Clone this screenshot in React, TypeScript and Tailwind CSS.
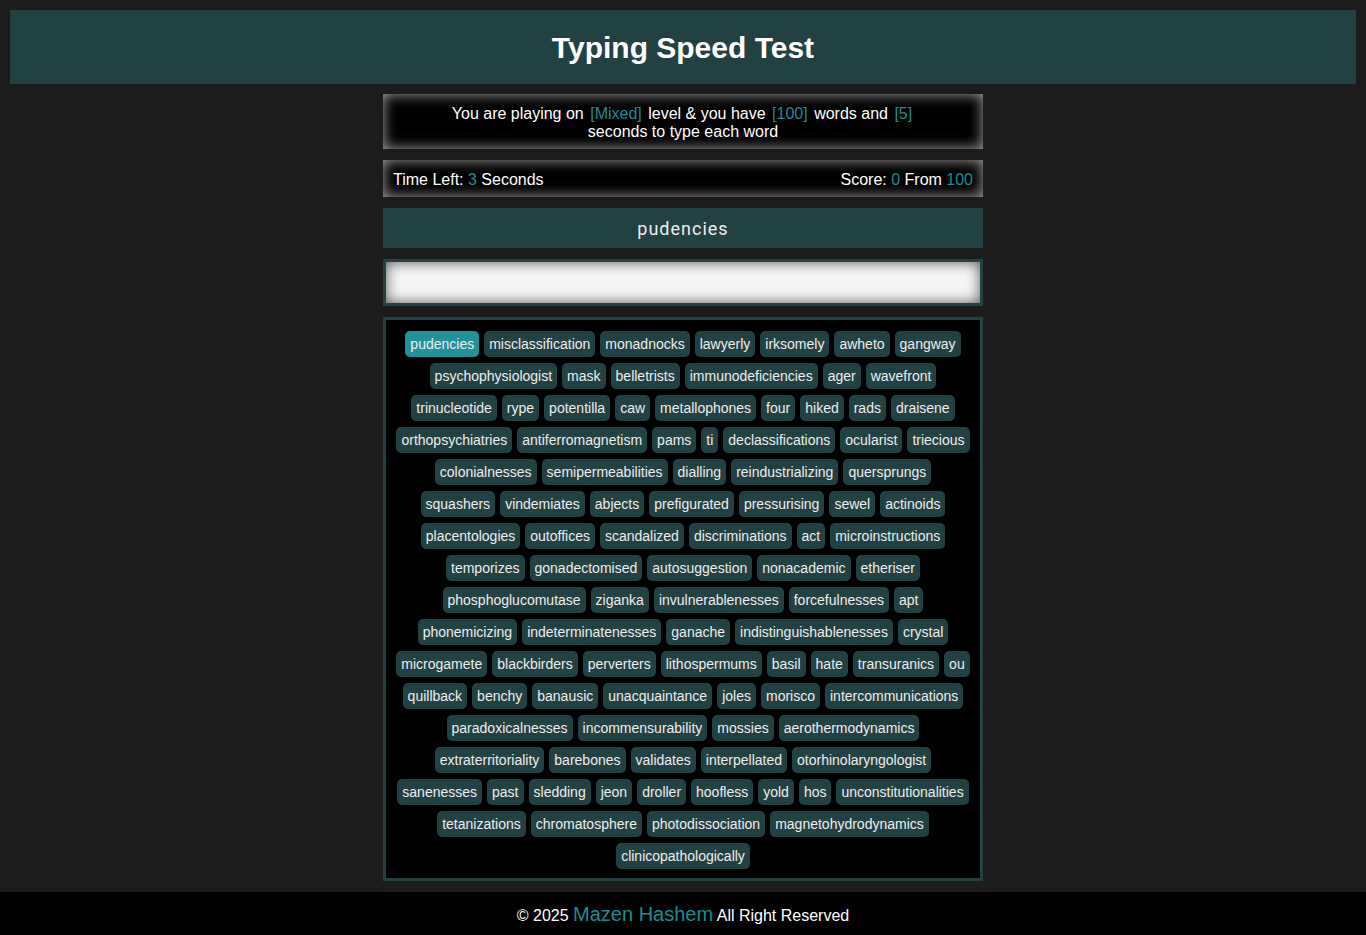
const words = [
  "pudencies", "misclassification", "monadnocks", "lawyerly", "irksomely", "awheto", "gangway",
  "psychophysiologist", "mask", "belletrists", "immunodeficiencies", "ager", "wavefront",
  "trinucleotide", "rype", "potentilla", "caw", "metallophones", "four", "hiked", "rads", "draisene",
  "orthopsychiatries", "antiferromagnetism", "pams", "ti", "declassifications", "ocularist", "triecious",
  "colonialnesses", "semipermeabilities", "dialling", "reindustrializing", "quersprungs",
  "squashers", "vindemiates", "abjects", "prefigurated", "pressurising", "sewel", "actinoids",
  "placentologies", "outoffices", "scandalized", "discriminations", "act", "microinstructions",
  "temporizes", "gonadectomised", "autosuggestion", "nonacademic", "etheriser",
  "phosphoglucomutase", "ziganka", "invulnerablenesses", "forcefulnesses", "apt",
  "phonemicizing", "indeterminatenesses", "ganache", "indistinguishablenesses", "crystal",
  "microgamete", "blackbirders", "perverters", "lithospermums", "basil", "hate", "transuranics", "ou",
  "quillback", "benchy", "banausic", "unacquaintance", "joles", "morisco", "intercommunications",
  "paradoxicalnesses", "incommensurability", "mossies", "aerothermodynamics",
  "extraterritoriality", "barebones", "validates", "interpellated", "otorhinolaryngologist",
  "sanenesses", "past", "sledding", "jeon", "droller", "hoofless", "yold", "hos", "unconstitutionalities",
  "tetanizations", "chromatosphere", "photodissociation", "magnetohydrodynamics",
  "clinicopathologically",
];

const App = () => {
  return (
    <div className="min-h-screen bg-[#1c1c1c] text-white font-['Liberation_Sans',Arial,sans-serif] flex flex-col">
      <div className="p-[10px] pb-0">
        <header className="h-[74px] bg-[#224143] flex items-center justify-center pt-[2px]">
          <h1 className="text-[30px] font-bold leading-none">Typing Speed Test</h1>
        </header>
      </div>

      <main className="w-[600px] mx-auto flex flex-col gap-[11px] mt-[10px] mb-[11px]">
        <div className="h-[55px] bg-black shadow-[inset_0_0_14px_#aaa] flex flex-col justify-center pt-[2px] text-center text-[16px] leading-[18px]">
          <p>
            You are playing on <span className="px-[2px] text-[#1e8c93]">[Mixed]</span> level &amp; you have{" "}
            <span className="px-[2px] text-[#1e8c93]">[100]</span> words and{" "}
            <span className="px-[2px] text-[#1e8c93]">[5]</span>
          </p>
          <p>seconds to type each word</p>
        </div>

        <div className="h-[37px] bg-black shadow-[inset_0_0_14px_#aaa] flex items-center justify-between px-[10px] pt-[2px] text-[16px]">
          <span>
            Time Left: <span className="text-[#1e8c93]">3</span> Seconds
          </span>
          <span>
            Score: <span className="text-[#1e8c93]">0</span> From <span className="text-[#1e8c93]">100</span>
          </span>
        </div>

        <div className="h-[40px] bg-[#224143] flex items-center justify-center text-[18px] tracking-[1px] text-[#eee] font-['Roboto',sans-serif]">
          pudencies
        </div>

        <input
          type="text"
          className="h-[47px] w-full border-[3px] border-[#224143] bg-[#f5f5f5] shadow-[inset_0_0_14px_#555] outline-none"
        />

        <div className="border-[3px] border-[#224143] bg-black px-[10px] pt-[11px] pb-[9px] flex flex-wrap justify-center gap-x-[5px] gap-y-[6px]">
          {words.map((w, i) => (
            <span
              key={w}
              className={`h-[26px] leading-[26px] px-[5px] rounded-[5px] text-[14px] text-[#eee] ${
                i === 0 ? "bg-[#21929a]" : "bg-[#224143]"
              }`}
            >
              {w}
            </span>
          ))}
        </div>
      </main>

      <footer className="mt-auto h-[43px] bg-black flex items-center justify-center text-[16px]">
        <span>
          © 2025 <span className="text-[20px] text-[#1e8c93]">Mazen Hashem</span> All Right Reserved
        </span>
      </footer>
    </div>
  );
};

export default App;
